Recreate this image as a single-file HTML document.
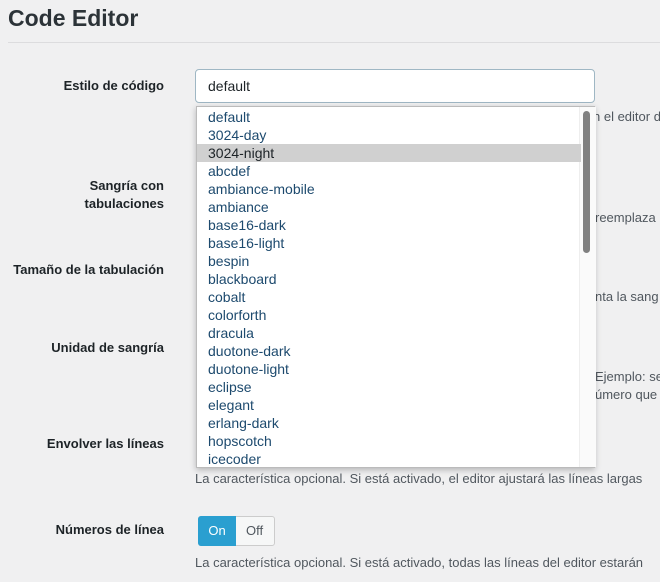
<!DOCTYPE html><html><head><meta charset="utf-8"><style>
body{margin:0;width:660px;height:582px;background:#f0f0f1;font-family:"Liberation Sans",sans-serif;position:relative;overflow:hidden;color:#1d2327}
.a{position:absolute;white-space:nowrap}
h1{position:absolute;left:8px;top:5px;margin:0;font-size:23px;font-weight:bold;color:#2c3338}
.hr{position:absolute;left:8px;right:0;top:42px;border-top:1px solid #dcdcde}
.l{position:absolute;right:496px;font-size:13px;font-weight:bold;text-align:right;color:#1d2327;line-height:18px}
.d{font-size:13px;color:#50575e}
.inp{position:absolute;left:195px;top:69px;border:1px solid #9fb7c4;border-radius:4px;background:#fff;font-size:14px;line-height:32px;padding-left:12px;box-sizing:border-box;width:400px;height:34px}
.dd{position:absolute;left:196px;top:106px;width:399px;height:362px;background:#fff;border:1px solid #bbb;box-sizing:border-box;box-shadow:0 2px 6px rgba(0,0,0,.25)}
.it{height:18px;line-height:18px;font-size:14px;color:#1d4a6e;padding-left:11px;width:384px;box-sizing:border-box}
.sel{background:#d0d0d0;color:#1d2327}
.sb{position:absolute;left:386px;top:4px;width:7px;height:142px;background:#808080;border-radius:4px}
.sbt{position:absolute;left:382px;top:0;width:16px;bottom:0;border-left:1px solid #eee;background:#fafafa}
</style></head><body>
<h1>Code Editor</h1><div class="hr"></div>
<div class="l" style="top:77px">Estilo de código</div>
<div class="l" style="top:177px">Sangría con<br>tabulaciones</div>
<div class="l" style="top:261px">Tamaño de la tabulación</div>
<div class="l" style="top:339px">Unidad de sangría</div>
<div class="l" style="top:435px">Envolver las líneas</div>
<div class="l" style="top:521px">Números de línea</div>
<div class="a d" style="left:593px;top:109px">n el editor d</div>
<div class="a d" style="left:595px;top:210px">reemplaza</div>
<div class="a d" style="left:595px;top:289px">nta la sang</div>
<div class="a d" style="left:595px;top:369px">Ejemplo: se</div>
<div class="a d" style="left:595px;top:387px">úmero que</div>
<div class="a d" style="left:195px;top:471px">La característica opcional. Si está activado, el editor ajustará las líneas largas</div>
<div class="a d" style="left:195px;top:555px">La característica opcional. Si está activado, todas las líneas del editor estarán</div>
<div class="a" style="left:198px;top:516px;width:77px;height:30px;border:1px solid #ccc;border-radius:3px;background:#f6f7f7;box-sizing:border-box;font-size:13px">
<div class="a" style="left:-1px;top:-1px;width:38px;height:30px;background:#2a9fd0;border-radius:3px 0 0 3px;color:#fff;line-height:30px;text-align:center">On</div>
<div class="a" style="left:47px;top:6px;color:#50575e">Off</div></div>
<div class="inp">default</div>
<div class="dd"><div class="sbt"></div><div class="sb"></div><div style="padding-top:1px;position:relative">
<div class="it">default</div><div class="it">3024-day</div><div class="it sel">3024-night</div><div class="it">abcdef</div><div class="it">ambiance-mobile</div><div class="it">ambiance</div><div class="it">base16-dark</div><div class="it">base16-light</div><div class="it">bespin</div><div class="it">blackboard</div><div class="it">cobalt</div><div class="it">colorforth</div><div class="it">dracula</div><div class="it">duotone-dark</div><div class="it">duotone-light</div><div class="it">eclipse</div><div class="it">elegant</div><div class="it">erlang-dark</div><div class="it">hopscotch</div><div class="it">icecoder</div>
</div></div>
</body></html>
